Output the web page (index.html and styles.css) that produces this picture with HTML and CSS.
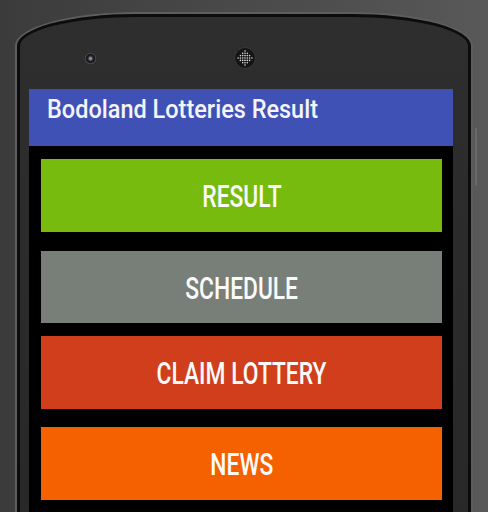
FILE: index.html
```html
<!DOCTYPE html>
<html>
<head>
<meta charset="utf-8">
<link rel="stylesheet" href="styles.css">
</head>
<body>
<div class="phone">
  <div class="side-key"></div>
  <div class="bezel-top">
    <div class="camera"></div>
    <svg class="speaker" width="22" height="22" viewBox="0 0 22 22">
      <circle cx="11" cy="11" r="10.5" fill="#151515" stroke="#3a3a3a" stroke-width="1"/>
      <g fill="#d8d8d8">
        <circle cx="11" cy="4" r="0.8"/>
        <circle cx="8.7" cy="6.3" r="0.8"/><circle cx="11" cy="6.3" r="0.8"/><circle cx="13.3" cy="6.3" r="0.8"/>
        <circle cx="6.4" cy="8.6" r="0.8"/><circle cx="8.7" cy="8.6" r="0.8"/><circle cx="11" cy="8.6" r="0.8"/><circle cx="13.3" cy="8.6" r="0.8"/><circle cx="15.6" cy="8.6" r="0.8"/>
        <circle cx="4.1" cy="11" r="0.8"/><circle cx="6.4" cy="11" r="0.8"/><circle cx="8.7" cy="11" r="0.8"/><circle cx="11" cy="11" r="0.8"/><circle cx="13.3" cy="11" r="0.8"/><circle cx="15.6" cy="11" r="0.8"/><circle cx="17.9" cy="11" r="0.8"/>
        <circle cx="6.4" cy="13.4" r="0.8"/><circle cx="8.7" cy="13.4" r="0.8"/><circle cx="11" cy="13.4" r="0.8"/><circle cx="13.3" cy="13.4" r="0.8"/><circle cx="15.6" cy="13.4" r="0.8"/>
        <circle cx="8.7" cy="15.7" r="0.8"/><circle cx="11" cy="15.7" r="0.8"/><circle cx="13.3" cy="15.7" r="0.8"/>
        <circle cx="11" cy="18" r="0.8"/>
      </g>
    </svg>
  </div>
  <div class="screen">
    <div class="appbar"><span class="title">Bodoland Lotteries Result</span></div>
    <div class="menu">
      <div class="btn btn-result"><span class="label">RESULT</span></div>
      <div class="btn btn-schedule"><span class="label">SCHEDULE</span></div>
      <div class="btn btn-claim"><span class="label">CLAIM LOTTERY</span></div>
      <div class="btn btn-news"><span class="label">NEWS</span></div>
    </div>
  </div>
</div>
</body>
</html>
```

FILE: styles.css
```css
html, body {
  margin: 0;
  padding: 0;
}
body {
  width: 488px;
  height: 512px;
  overflow: hidden;
  background: linear-gradient(90deg, #3b3b3b 0%, #474747 40%, #4f4f4f 70%, #595959 100%);
  font-family: Roboto, "Liberation Sans", sans-serif;
}
.phone {
  position: relative;
  margin: 14px 0 0 17px;
  width: 454px;
  height: 498px;
  background: linear-gradient(180deg, #2e2e2e 0%, #282828 100%);
  border: 3px solid #0c0c0c;
  border-bottom: none;
  border-top-left-radius: 120px 32px;
  border-top-right-radius: 120px 32px;
  box-shadow: 0 0 0 2px #5e5e5e;
  padding: 0 13px 0 9px;
  box-sizing: border-box;
}
.side-key {
  position: absolute;
  right: -9px;
  top: 111px;
  width: 2px;
  height: 58px;
  background: #6a6a6a;
  border-radius: 1px;
}
.bezel-top {
  height: 72px;
  display: flex;
  align-items: center;
  padding-top: 10px;
  box-sizing: border-box;
}
.camera {
  width: 11px;
  height: 11px;
  border-radius: 50%;
  background: radial-gradient(circle at 50% 50%, #8a8a95 0 1.2px, #3a3a44 2.2px, #16161a 3.5px, #1a1a1e 4.2px, #5a5a5e 5.5px);
  margin-left: 56px;
}
.speaker {
  margin-left: 138px;
  display: block;
}
.screen {
  background: #000;
  height: 426px;
  width: 424px;
}
.appbar {
  height: 57px;
  background: #3f51b5;
  display: flex;
  align-items: flex-start;
  padding: 4px 0 0 18px;
  box-sizing: border-box;
}
.title {
  color: #f4f4fa;
  font-size: 25px;
  font-weight: 500;
  line-height: 34px;
  display: inline-block;
  transform-origin: left center;
  transform: scaleX(0.94);
  white-space: nowrap;
}
.menu {
  display: flex;
  flex-direction: column;
  padding: 13px 11px 0 12px;
}
.btn {
  height: 73px;
  display: flex;
  align-items: center;
  justify-content: center;
  padding-top: 2px;
  box-sizing: border-box;
  color: #fafafa;
}
.label {
  display: inline-block;
  font-size: 31px;
  font-weight: 500;
  transform: scaleX(0.735);
  white-space: nowrap;
}
.btn-result { background: #76bb0e; }
.btn-schedule { background: #787f78; margin-top: 19px; height: 72px; }
.btn-claim { background: #d03e1b; margin-top: 13px; }
.btn-news { background: #f56000; margin-top: 18px; }
```
